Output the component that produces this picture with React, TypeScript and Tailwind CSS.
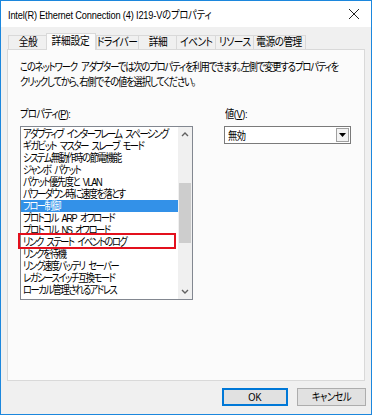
import React from "react";

const FONT = "font-['Liberation_Sans','Noto_Sans_CJK_JP',sans-serif] [font-feature-settings:'palt']";

function T({
  children,
  className = "",
  center = false,
  latin = false,
}: {
  children: React.ReactNode;
  className?: string;
  center?: boolean;
  latin?: boolean;
}) {
  return (
    <span
      className={`inline-block whitespace-nowrap scale-x-[0.84] ${latin ? "[word-spacing:0px]" : "[word-spacing:3px]"} ${
        center ? "origin-center" : "origin-left"
      } ${className}`}
    >
      {children}
    </span>
  );
}

const tabs = [
  { label: "全般", w: 38 },
  { label: "詳細設定", w: 50, selected: true },
  { label: "ドライバー", w: 42 },
  { label: "詳細", w: 38 },
  { label: "イベント", w: 39 },
  { label: "リソース", w: 38 },
  { label: "電源の管理", w: 53 },
];

const items = [
  "アダプティブ インターフレーム スペーシング",
  "ギガビット マスター スレーブ モード",
  "システム無動作時の節電機能",
  "ジャンボ パケット",
  "パケット優先度と VLAN",
  "パワーダウン時に速度を落とす",
  "フロー制御",
  "プロトコル ARP オフロード",
  "プロトコル NS オフロード",
  "リンク ステート イベントのログ",
  "リンクを待機",
  "リンク速度バッテリ セーバー",
  "レガシースイッチ互換モード",
  "ローカル管理されるアドレス",
];

export default function App() {
  return (
    <div className={`w-[372px] h-[415px] border border-[#1c87dd] bg-[#f0f0f0] flex flex-col text-black overflow-hidden ${FONT}`}>
      {/* title bar */}
      <div className="h-[26px] bg-white flex items-center pl-[7px] pr-[6px] overflow-hidden">
        <div className="flex-1 min-w-0 overflow-hidden">
          <T latin className="text-[11px] leading-none tracking-[-0.2px]">
            Intel(R) Ethernet Connection (4) I219-Vのプロパティ
          </T>
        </div>
        <div className="w-[14px] h-[14px] shrink-0 flex items-center justify-center mr-[4px]">
          <svg width="12" height="12" viewBox="0 0 12 12">
            <path d="M1 1 L11 11 M11 1 L1 11" stroke="#222" strokeWidth="1" fill="none" />
          </svg>
        </div>
      </div>

      <div className="px-[6px] flex flex-col">
        {/* tabs */}
        <div className="mt-[6px] h-[16px] flex items-end pl-[1px] relative z-10">
          {tabs.map((t) =>
            t.selected ? (
              <div
                key={t.label}
                style={{ width: t.w }}
                className="h-[17px] -mb-px bg-[#fbfbfb] border border-b-0 border-[#d9d9d9] flex items-center justify-center overflow-hidden"
              >
                <T center className="text-[11.5px] leading-none tracking-[-0.2px]">{t.label}</T>
              </div>
            ) : (
              <div
                key={t.label}
                style={{ width: t.w }}
                className="h-[14px] bg-[#f0f0f0] border border-b-0 border-r-0 last:border-r border-[#d9d9d9] flex items-center justify-center overflow-hidden"
              >
                <T center className="text-[11.5px] leading-none tracking-[-0.6px]">{t.label}</T>
              </div>
            )
          )}
        </div>

        {/* panel */}
        <div className="h-[332px] bg-[#fbfbfb] border border-[#d9d9d9] flex flex-col pl-[12px] pt-[10px] overflow-hidden">
          <div className="flex flex-col text-[11px] leading-[15px] tracking-[-1.3px] overflow-hidden">
            <div className="h-[15px]">
              <T>このネットワーク アダプターでは次のプロパティを利用できます。左側で変更するプロパティを</T>
            </div>
            <div className="h-[15px]">
              <T>クリックしてから、右側でその値を選択してください。</T>
            </div>
          </div>

          <div className="mt-[17px] flex">
            {/* properties */}
            <div className="flex flex-col">
              <div className="text-[11px] leading-[14px] h-[16px] tracking-[-0.8px]">
                <T>
                  プロパティ(<span className="underline">P</span>):
                </T>
              </div>
              <div className="mt-[3px] w-[173px] h-[174px] bg-white border border-[#828790] flex relative">
                <div className="flex-1 min-w-0 overflow-hidden pt-[1px] flex flex-col">
                  {items.map((it) => (
                    <div
                      key={it}
                      className={`h-[12px] flex items-center pl-[2px] overflow-hidden ${
                        it === "フロー制御" ? "bg-[#3391e8] text-white" : ""
                      }`}
                    >
                      <T className="text-[11px] leading-none tracking-[-1.7px]">{it}</T>
                    </div>
                  ))}
                </div>
                {/* scrollbar */}
                <div className="w-[14px] shrink-0 bg-[#f0f0f0] flex flex-col">
                  <div className="h-[14px] flex items-center justify-center">
                    <svg width="8" height="6" viewBox="0 0 8 6">
                      <path d="M1 5 L4 2 L7 5" stroke="#606060" strokeWidth="1.4" fill="none" />
                    </svg>
                  </div>
                  <div className="flex-1 flex flex-col px-[1px]">
                    <div className="h-[42px]" />
                    <div className="h-[60px] bg-[#cdcdcd]" />
                  </div>
                  <div className="h-[14px] flex items-center justify-center">
                    <svg width="8" height="6" viewBox="0 0 8 6">
                      <path d="M1 1 L4 4 L7 1" stroke="#606060" strokeWidth="1.4" fill="none" />
                    </svg>
                  </div>
                </div>
                {/* red annotation box */}
                <div className="absolute left-[-3px] top-[106px] w-[158px] h-[16px] border-2 border-[#e3101d] pointer-events-none" />
              </div>
            </div>

            {/* value */}
            <div className="ml-[31px] flex flex-col">
              <div className="text-[11px] leading-[14px] h-[16px] pl-[1px] tracking-[-0.5px]">
                <T>
                  値(<span className="underline">V</span>):
                </T>
              </div>
              <div className="mt-[3px] w-[127px] h-[18px] bg-white border border-[#7a7a7a] flex items-center">
                <div className="pl-[3px] flex-1 min-w-0">
                  <T className="text-[11px] leading-none tracking-[-0.5px]">無効</T>
                </div>
                <div className="ml-auto mr-[1px] w-[13px] h-[14px] border border-[#a0a0a0] bg-[#f3f3f3] flex items-center justify-center">
                  <svg width="7" height="4" viewBox="0 0 7 4">
                    <path d="M0 0 L7 0 L3.5 4 Z" fill="#000" />
                  </svg>
                </div>
              </div>
            </div>
          </div>
        </div>

        {/* buttons */}
        <div className="mt-[7px] flex justify-end gap-[9px] mr-[-1px]">
          <div className="w-[66px] h-[18px] bg-[#e1e1e1] border-2 border-[#0078d7] flex items-center justify-center">
            <T latin center className="text-[11px] leading-none">OK</T>
          </div>
          <div className="w-[69px] h-[18px] bg-[#e1e1e1] border border-[#adadad] flex items-center justify-center overflow-hidden">
            <T center className="text-[11px] leading-none tracking-[-0.6px]">キャンセル</T>
          </div>
        </div>
      </div>
    </div>
  );
}
